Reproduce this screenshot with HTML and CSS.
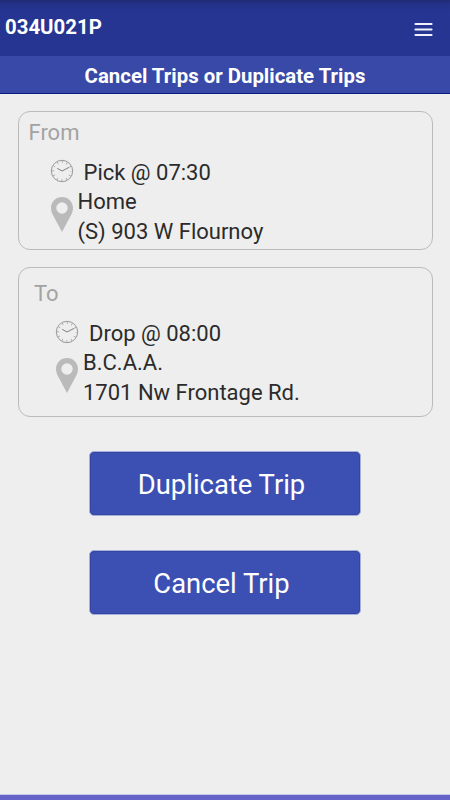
FILE: index.html
```html
<!DOCTYPE html>
<html lang="en">
<head>
<meta charset="utf-8">
<title>Trips</title>
<link rel="stylesheet" href="styles.css">
</head>
<body>
<svg class="defs" aria-hidden="true">
  <symbol id="clock" viewBox="0 0 24 24">
    <circle cx="12" cy="12" r="10.7" fill="none" stroke="#999" stroke-width="1"/>
    <circle cx="12" cy="12" r="9" fill="none" stroke="#999" stroke-width="2.200" stroke-dasharray=".7 4.012" stroke-dashoffset=".35"/>
    <path d="M7.2 9.300 12 12l7-3.600" fill="none" stroke="#808080" stroke-width="1"/>
  </symbol>
  <symbol id="pin" viewBox="0 0 22 35">
    <path fill="#bababa" fill-rule="evenodd" d="M11 0C4.900 0 0 4.900 0 11c0 2.500.7 4.700 1.800 6.700L11 35l9.200-17.300C21.300 15.700 22 13.500 22 11 22 4.900 17.100 0 11 0Zm0 5.300a5.700 5.700 0 1 1 0 11.400 5.700 5.700 0 0 1 0-11.400Z"/>
  </symbol>
</svg>
<header class="topbar">
  <h1 class="code">034U021P</h1>
  <svg class="menu" viewBox="0 0 19 15"><path d="M1.500 2h16M1.500 7.500h16M1.500 13h16" stroke="#f1f2fc" stroke-width="2.200" stroke-linecap="round"/></svg>
</header>
<h2 class="subtitle">Cancel Trips or Duplicate Trips</h2>
<main class="content">
  <section class="card">
    <h3 class="label">From</h3>
    <div class="time"><svg class="clock"><use href="#clock"/></svg><span>Pick @ 07:30</span></div>
    <div class="place"><svg class="pin"><use href="#pin"/></svg><p>Home<br>(S) 903 W Flournoy</p></div>
  </section>
  <section class="card card-to">
    <h3 class="label">To</h3>
    <div class="time"><svg class="clock"><use href="#clock"/></svg><span>Drop @ 08:00</span></div>
    <div class="place"><svg class="pin"><use href="#pin"/></svg><p>B.C.A.A.<br>1701 Nw Frontage Rd.</p></div>
  </section>
  <button class="btn">Duplicate Trip</button>
  <button class="btn">Cancel Trip</button>
</main>
<footer class="bottom"></footer>
</body>
</html>
```
FILE: styles.css
```css
* { box-sizing: border-box; }
body {
  margin: 0;
  height: 800px;
  display: flex;
  flex-direction: column;
  background: #eee;
  color: #2b2b2b;
  font-family: Roboto, sans-serif;
  overflow: hidden;
}
h1, h2, h3, p { margin: 0; }
.defs { display: none; }
.topbar {
  height: 56px;
  display: flex;
  justify-content: space-between;
  align-items: flex-start;
  padding: 15px 17px 0 5px;
  background: linear-gradient(#202c73, #25328a 5px, #263592 12px);
  color: #fff;
}
.code { font-size: 20.4px; line-height: 24px; font-weight: 700; }
.menu { width: 19px; height: 15px; margin-top: 7px; }
.subtitle {
  height: 38px;
  border-bottom: 1px solid #0b1b80;
  background: #3849a8;
  color: #fff;
  font-size: 20.4px;
  line-height: 40px;
  font-weight: 700;
  text-align: center;
}
.content {
  flex: 1;
  display: flex;
  flex-direction: column;
  align-items: center;
  padding: 17px 17.5px 0;
}
.card {
  width: 100%;
  height: 139px;
  padding: 7px 10px 0;
  border: 1px solid #bbb;
  border-radius: 12px;
  font-size: 22px;
}
.card-to {
  height: 150px;
  margin: 17px 0 34px;
  padding: 12px 15.5px 0;
}
.label { color: #a3a3a3; font-size: 22px; line-height: 28px; font-weight: 400; }
.time {
  height: 29px;
  display: flex;
  align-items: center;
  gap: 10px;
  margin-top: 11px;
  padding-left: 21px;
}
.clock { width: 24px; height: 24px; margin-bottom: 3px; }
.place {
  display: flex;
  gap: 5px;
  padding-left: 22px;
  line-height: 29.5px;
}
.pin { width: 22px; height: 35px; margin-top: 10px; }
.btn {
  width: 272px;
  height: 65px;
  margin-bottom: 34px;
  padding: 3px 7px 0 0;
  border: 1px solid #a5b0dd;
  border-radius: 5px;
  background: #3c50b3;
  box-shadow: inset 0 0 0 1px #3446a0;
  color: #fff;
  font: 400 27.4px Roboto, sans-serif;
}
.bottom { height: 6px; border-top: 1px solid #c5caf0; background: #6663c8; }
```
